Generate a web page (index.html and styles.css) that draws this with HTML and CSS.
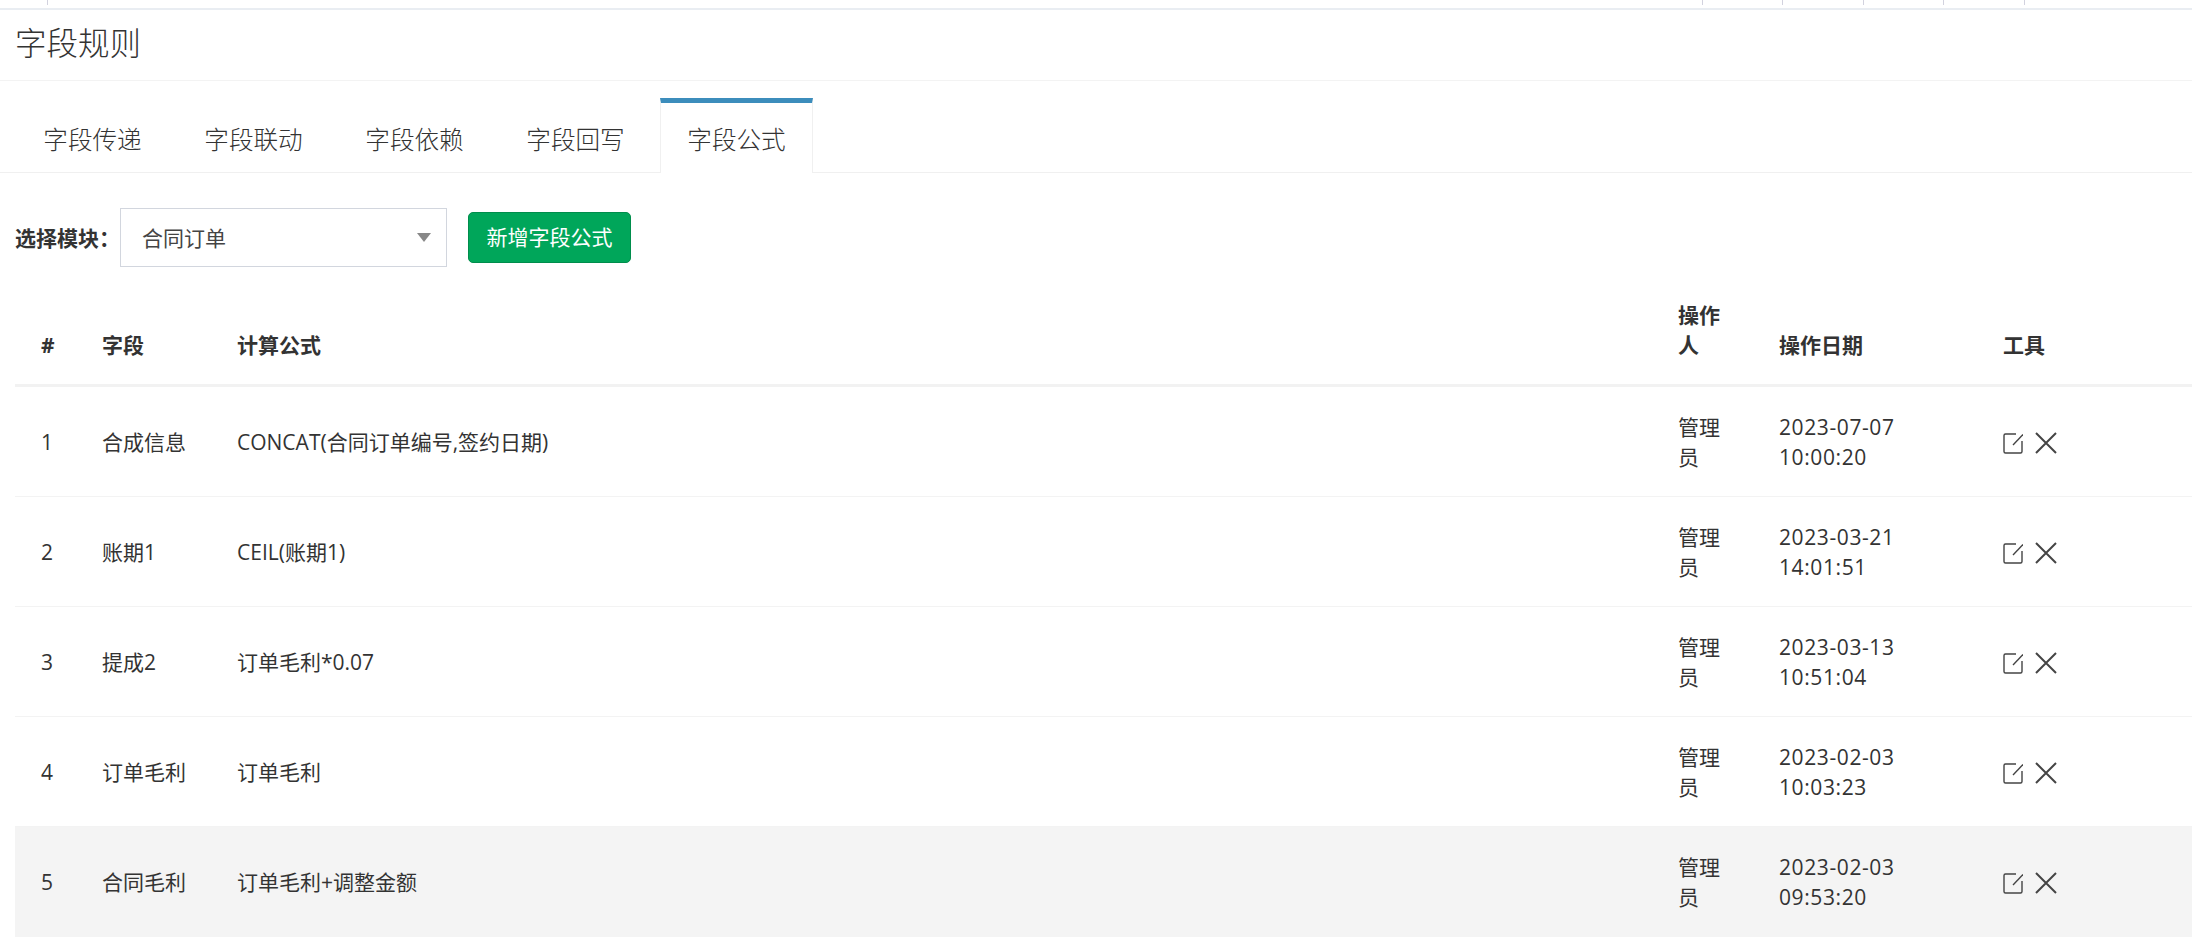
FILE: index.html
```html
<!DOCTYPE html>
<html lang="zh-CN">
<head>
    <meta charset="UTF-8">
    <meta name="viewport" content="width=device-width, initial-scale=1.0">
    <title>字段规则</title>
    <link rel="stylesheet" href="styles.css">
</head>
<body>
    <svg class="icon-defs" aria-hidden="true">
        <symbol id="icon-edit" viewBox="0 0 20 22">
            <path d="M13 2H2.500A1.500 1.500 0 0 0 1 3.500V19.500A1.500 1.500 0 0 0 2.500 21H17.500A1.500 1.500 0 0 0 19 19.500V9" fill="none" stroke="currentColor" stroke-width="1.400"/>
            <path d="M20 2.500L10 13" fill="none" stroke="currentColor" stroke-width="1.400"/>
        </symbol>
        <symbol id="icon-close" viewBox="0 0 22 22">
            <path d="M1 1L21 21M21 1L1 21" fill="none" stroke="currentColor" stroke-width="2"/>
        </symbol>
    </svg>

    <div class="topbar">
        <span class="topbar-tick topbar-tick-first"></span>
        <span class="topbar-tick"></span>
        <span class="topbar-tick"></span>
        <span class="topbar-tick"></span>
        <span class="topbar-tick"></span>
        <span class="topbar-tick"></span>
    </div>

    <h1 class="page-title">字段规则</h1>

    <ul class="tabs">
        <li class="tab">字段传递</li>
        <li class="tab">字段联动</li>
        <li class="tab">字段依赖</li>
        <li class="tab">字段回写</li>
        <li class="tab tab-active">字段公式</li>
    </ul>

    <div class="toolbar">
        <label class="toolbar-label">选择模块：</label>
        <div class="select-box">
            <span>合同订单</span>
            <span class="select-arrow"></span>
        </div>
        <button class="add-btn">新增字段公式</button>
    </div>

    <table class="rules">
        <thead>
            <tr>
                <th class="col-no">#</th>
                <th class="col-field">字段</th>
                <th class="col-formula">计算公式</th>
                <th class="col-user">操作人</th>
                <th class="col-date">操作日期</th>
                <th class="col-tools">工具</th>
            </tr>
        </thead>
        <tbody>
            <tr>
                <td>1</td>
                <td>合成信息</td>
                <td>CONCAT(合同订单编号,签约日期)</td>
                <td>管理员</td>
                <td class="cell-date">2023-07-07 10:00:20</td>
                <td><svg class="icon icon-e"><use href="#icon-edit"/></svg><svg class="icon icon-x"><use href="#icon-close"/></svg></td>
            </tr>
            <tr>
                <td>2</td>
                <td>账期1</td>
                <td>CEIL(账期1)</td>
                <td>管理员</td>
                <td class="cell-date">2023-03-21 14:01:51</td>
                <td><svg class="icon icon-e"><use href="#icon-edit"/></svg><svg class="icon icon-x"><use href="#icon-close"/></svg></td>
            </tr>
            <tr>
                <td>3</td>
                <td>提成2</td>
                <td>订单毛利*0.07</td>
                <td>管理员</td>
                <td class="cell-date">2023-03-13 10:51:04</td>
                <td><svg class="icon icon-e"><use href="#icon-edit"/></svg><svg class="icon icon-x"><use href="#icon-close"/></svg></td>
            </tr>
            <tr>
                <td>4</td>
                <td>订单毛利</td>
                <td>订单毛利</td>
                <td>管理员</td>
                <td class="cell-date">2023-02-03 10:03:23</td>
                <td><svg class="icon icon-e"><use href="#icon-edit"/></svg><svg class="icon icon-x"><use href="#icon-close"/></svg></td>
            </tr>
            <tr class="row-hover">
                <td>5</td>
                <td>合同毛利</td>
                <td>订单毛利+调整金额</td>
                <td>管理员</td>
                <td class="cell-date">2023-02-03 09:53:20</td>
                <td><svg class="icon icon-e"><use href="#icon-edit"/></svg><svg class="icon icon-x"><use href="#icon-close"/></svg></td>
            </tr>
        </tbody>
    </table>
</body>
</html>
```

FILE: styles.css
```css
* {
    box-sizing: border-box;
}
body {
    margin: 0;
    font-family: "Open Sans", "Noto Sans CJK SC", sans-serif;
    font-size: 21px;
    line-height: 30px;
    color: #333;
    background-color: #fff;
}
.icon-defs {
    display: none;
}
.topbar {
    display: flex;
    height: 10px;
    border-bottom: 2px solid #e9edf2;
    padding-right: 88px;
}
.topbar-tick {
    width: 80.500px;
    height: 5px;
    border-left: 1px solid #d2d2de;
}
.topbar-tick-first {
    width: auto;
    margin-left: 47px;
    margin-right: auto;
}
.page-title {
    margin: 0;
    height: 71px;
    padding: 0 15px;
    border-bottom: 1px solid #f3f3f3;
    font-size: 31.500px;
    font-weight: 300;
    line-height: 66px;
    color: #333;
}
.tabs {
    display: flex;
    gap: 8px;
    margin: 0;
    padding: 17px 0 0 16px;
    height: 92px;
    list-style: none;
    border-bottom: 1px solid #f0f0f0;
}
.tab {
    width: 153px;
    height: 75px;
    padding: 5px 0 0;
    border: 1px solid transparent;
    border-top-width: 5px;
    border-bottom: none;
    font-size: 24.600px;
    font-weight: 300;
    line-height: 64px;
    text-align: center;
    color: #333;
}
.tab-active {
    height: 75px;
    background-color: #fff;
    border-color: #f0f0f0;
    border-top-color: #3c8dbc;
}
.toolbar {
    display: flex;
    align-items: center;
    padding: 35px 15px 0;
}
.toolbar-label {
    width: 105px;
    font-weight: 700;
}
.select-box {
    display: flex;
    align-items: center;
    justify-content: space-between;
    width: 327px;
    height: 59px;
    padding: 0 15px 0 21px;
    border: 1px solid #d2d6de;
    color: #444;
}
.select-arrow {
    width: 0;
    height: 0;
    border-top: 9px solid #888;
    border-left: 7px solid transparent;
    border-right: 7px solid transparent;
}
.add-btn {
    margin-left: 21px;
    width: 163px;
    height: 51px;
    padding: 0 0 2px;
    font: inherit;
    color: #fff;
    background-color: #00a65a;
    border: 1px solid #008d4c;
    border-radius: 5px;
}
.rules {
    width: 2177px;
    margin-left: 15px;
    margin-top: 8px;
    border-collapse: collapse;
    table-layout: fixed;
}
.rules th,
.rules td {
    padding: 24.500px 20px 24.500px 26px;
    text-align: left;
}
.rules th {
    vertical-align: bottom;
    font-weight: 700;
    border-bottom: 3px solid #f2f2f2;
}
.rules td {
    vertical-align: middle;
    border-bottom: 1px solid #f3f3f3;
}
.rules tbody tr:last-child td {
    padding-bottom: 25.500px;
    border-bottom: none;
}
.col-no {
    width: 61px;
}
.col-field {
    width: 135px;
}
.col-formula {
    width: 1441px;
}
.col-user {
    width: 101px;
}
.col-date {
    width: 224px;
}
.col-tools {
    width: 215px;
}
.cell-date {
    letter-spacing: 0.6px;
}
.row-hover {
    background-color: #f4f4f4;
}
.icon {
    display: inline-block;
    vertical-align: middle;
    margin-bottom: 2px;
    color: #444;
}
.icon-e {
    width: 20px;
    height: 22px;
    margin-right: 12px;
}
.icon-x {
    width: 22px;
    height: 22px;
}
```
